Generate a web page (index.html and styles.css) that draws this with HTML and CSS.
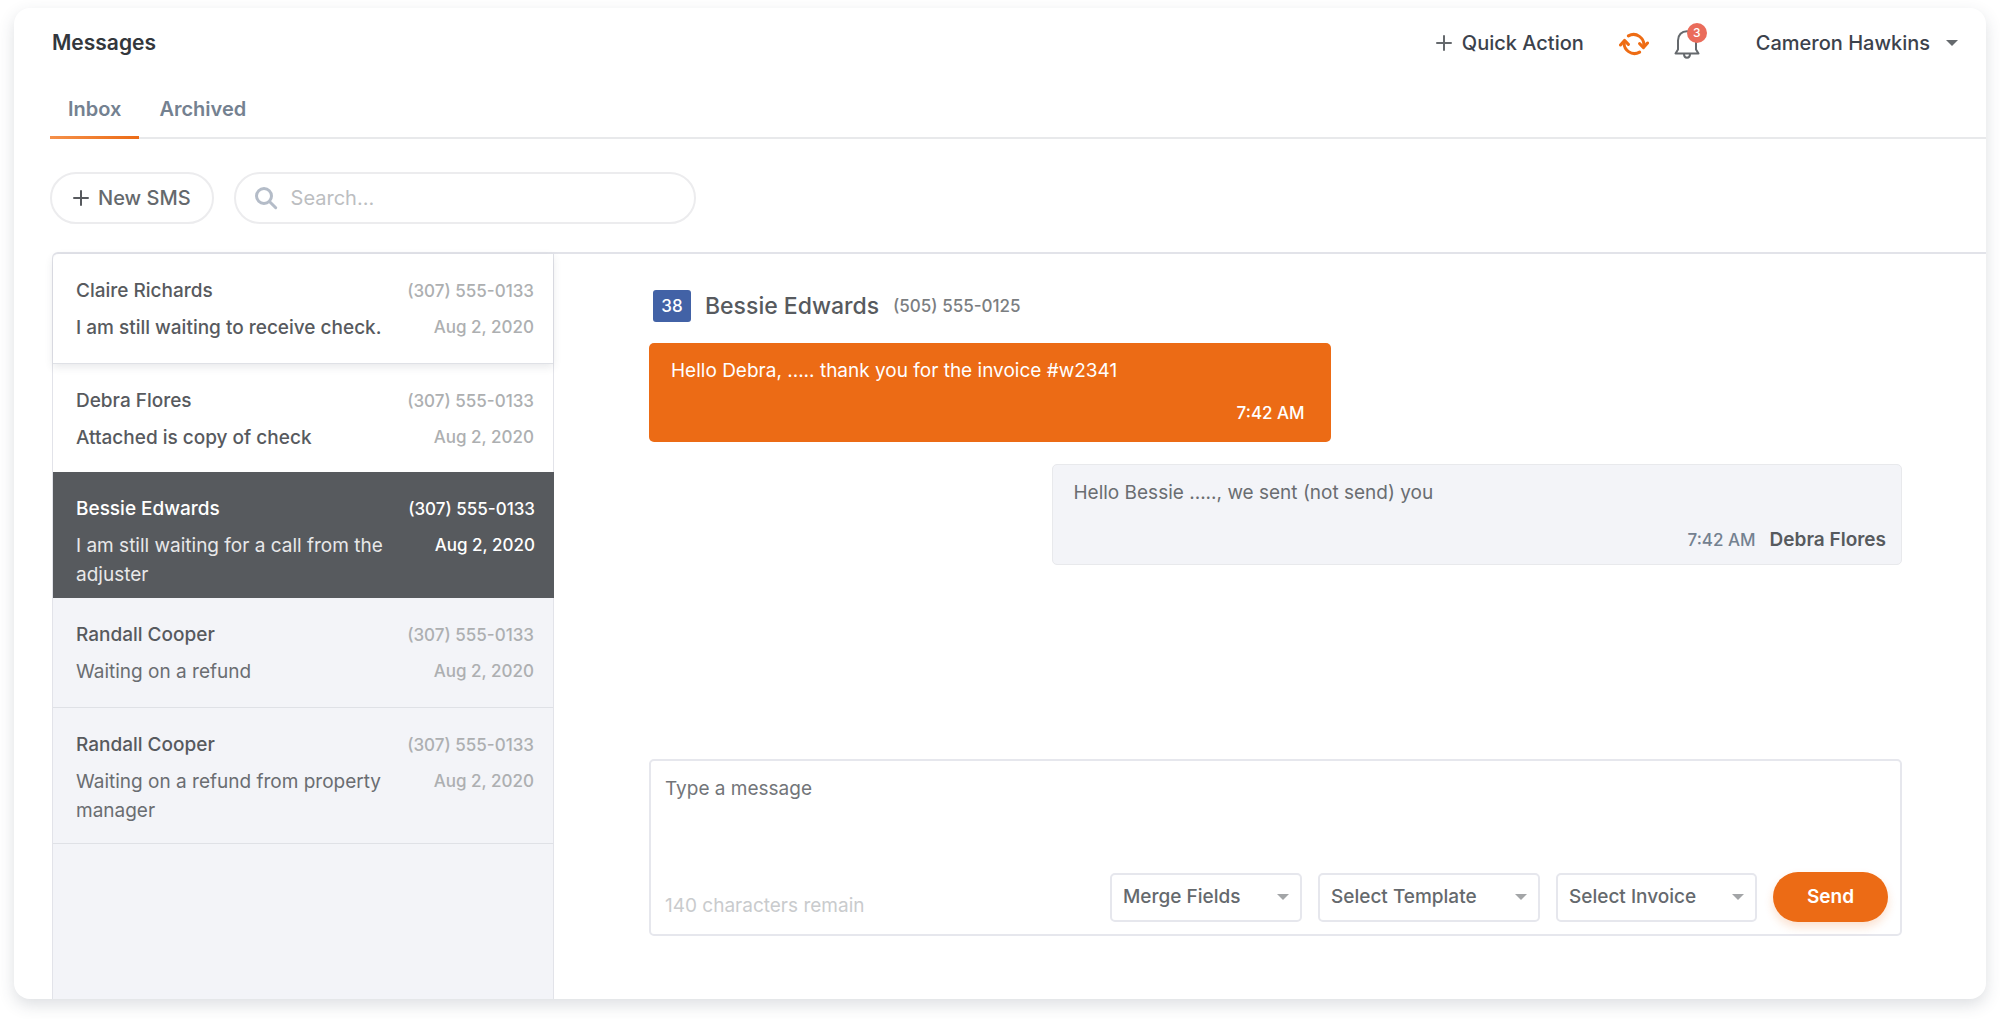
FILE: index.html
```
<!DOCTYPE html>
<html lang="en">
<head>
<meta charset="utf-8">
<meta name="viewport" content="width=device-width, initial-scale=1">
<title>Messages</title>
<link rel="stylesheet" href="styles.css">
</head>
<body>
<main class="card">
  <header class="topbar">
    <h1 class="title">Messages</h1>
    <div class="actions">
      <button class="quick" type="button">
        <svg class="plus" viewBox="0 0 16 16" aria-hidden="true"><path d="M8 1v14M1 8h14"/></svg>
        Quick Action
      </button>
      <button class="icon-btn refresh" type="button" aria-label="Refresh">
        <svg width="30" height="24" viewBox="0 0 30 24" fill="none" stroke="#ee6c14" stroke-width="3" stroke-linecap="round" stroke-linejoin="round" aria-hidden="true">
          <path d="M9.400 3.900A10.300 10.300 0 0 1 24.700 14.500"/>
          <path d="M20.600 11.600l3.900 4 4-4.600"/>
          <path d="M20.600 20.100A10.300 10.300 0 0 1 5.300 9.500"/>
          <path d="M1.500 13l4-4.600 3.900 4"/>
        </svg>
      </button>
      <button class="icon-btn bell" type="button" aria-label="3 notifications">
        <svg width="26" height="30" viewBox="0 0 26 30" fill="none" stroke="#65696d" stroke-width="2" stroke-linecap="round" stroke-linejoin="round" aria-hidden="true">
          <path d="M1.500 24.500h23l-2.500-4V11.500C22 6 18.300 2.200 13 2.200S4 6 4 11.500v9z"/>
          <path d="M10 25c0 2.200 1.200 3.700 3 3.700s3-1.500 3-3.700"/>
        </svg>
        <span class="count">3</span>
      </button>
      <button class="user" type="button">Cameron Hawkins <span class="caret"></span></button>
    </div>
  </header>

  <nav class="tabs">
    <a class="tab active" href="#inbox" aria-current="page">Inbox</a>
    <a class="tab" href="#archived">Archived</a>
  </nav>

  <div class="tools">
    <button class="new-sms" type="button">
      <svg class="plus" viewBox="0 0 16 16" aria-hidden="true"><path d="M8 1v14M1 8h14"/></svg>
      New SMS
    </button>
    <label class="search">
      <svg width="24" height="24" viewBox="0 0 24 24" fill="none" stroke="#b4bcc8" stroke-width="3" stroke-linecap="round" aria-hidden="true">
        <circle cx="10" cy="10" r="7.500"/><path d="M15.700 15.700l6 6"/>
      </svg>
      <input type="search" placeholder="Search..." aria-label="Search">
    </label>
  </div>

  <div class="panes">
    <ul class="threads">
      <li class="thread raised">
        <div class="who"><h2>Claire Richards</h2><p>I am still waiting to receive check.</p></div>
        <div class="meta"><span>(307) 555-0133</span><time>Aug 2, 2020</time></div>
      </li>
      <li class="thread unread">
        <div class="who"><h2>Debra Flores</h2><p>Attached is copy of check</p></div>
        <div class="meta"><span>(307) 555-0133</span><time>Aug 2, 2020</time></div>
      </li>
      <li class="thread selected">
        <div class="who"><h2>Bessie Edwards</h2><p>I am still waiting for a call from the adjuster</p></div>
        <div class="meta"><span>(307) 555-0133</span><time>Aug 2, 2020</time></div>
      </li>
      <li class="thread">
        <div class="who"><h2>Randall Cooper</h2><p>Waiting on a refund</p></div>
        <div class="meta"><span>(307) 555-0133</span><time>Aug 2, 2020</time></div>
      </li>
      <li class="thread">
        <div class="who"><h2>Randall Cooper</h2><p>Waiting on a refund from property manager</p></div>
        <div class="meta"><span>(307) 555-0133</span><time>Aug 2, 2020</time></div>
      </li>
    </ul>

    <section class="chat">
      <header class="chat-head">
        <span class="number">38</span>
        <h2>Bessie Edwards</h2>
        <span class="phone">(505) 555-0125</span>
      </header>
      <article class="bubble incoming">
        <p>Hello Debra, ..... thank you for the invoice #w2341</p>
        <footer><time>7:42 AM</time></footer>
      </article>
      <article class="bubble outgoing">
        <p>Hello Bessie ....., we sent (not send) you</p>
        <footer><time>7:42 AM</time><strong>Debra Flores</strong></footer>
      </article>
      <form class="composer">
        <textarea placeholder="Type a message" aria-label="Message"></textarea>
        <div class="composer-bar">
          <span class="remain">140 characters remain</span>
          <span class="select merge"><select aria-label="Merge Fields"><option>Merge Fields</option></select></span>
          <span class="select template"><select aria-label="Select Template"><option>Select Template</option></select></span>
          <span class="select invoice"><select aria-label="Select Invoice"><option>Select Invoice</option></select></span>
          <button class="send" type="button">Send</button>
        </div>
      </form>
    </section>
  </div>
</main>
</body>
</html>
```
FILE: styles.css
```
:root {
  --orange: #ec6b15;
  --ink: #575a5e;
  --line: #e2e3e9;
  --pale: #f3f4f8;
}

* { box-sizing: border-box; }

body {
  margin: 0;
  padding: 8px 14px 20px;
  min-height: 100vh;
  display: flex;
  background: #fff;
  color: var(--ink);
  font: 19px/28px "Inter", sans-serif;
}

h1, h2, p, ul { margin: 0; padding: 0; }
button, input, textarea, select { font: inherit; color: inherit; }
button { padding: 0; border: 0; background: none; cursor: pointer; }

.card {
  flex: 1;
  display: flex;
  flex-direction: column;
  min-width: 0;
  border-radius: 16px;
  background: #fff;
  box-shadow: 0 6px 16px rgba(55, 68, 85, .17);
}

/* Top bar */
.topbar {
  display: flex;
  align-items: center;
  justify-content: space-between;
  height: 70px;
  padding: 0 28px 0 38px;
}
.title { font-size: 21px; font-weight: 600; color: #33373c; }
.actions { display: flex; align-items: center; font-size: 20px; font-weight: 500; color: #3c424c; }
.plus { width: 16px; height: 16px; fill: none; stroke: #65696d; stroke-width: 2; stroke-linecap: round; }
.quick { display: flex; align-items: center; gap: 10px; }
.icon-btn { display: flex; position: relative; padding-top: 2px; }
.refresh { margin-left: 35px; }
.bell { margin-left: 25px; }
.count {
  position: absolute;
  top: -4px;
  right: -7px;
  width: 20px;
  border-radius: 10px;
  background: #ea6c5b;
  color: #fff;
  font-size: 12px;
  line-height: 20px;
}
.user { display: flex; align-items: center; gap: 16px; margin-left: 56px; }
.caret {
  border: 6px solid transparent;
  border-top-color: #65696d;
  border-bottom: 0;
}

/* Tabs */
.tabs { display: flex; margin-left: 36px; border-bottom: 2px solid #e8e9eb; }
.tab {
  margin-bottom: -2px;
  padding: 17px 20px 13px;
  border-bottom: 3px solid transparent;
  color: #748190;
  font-size: 20px;
  font-weight: 600;
  text-decoration: none;
}
.tab.active {
  padding-left: 18px;
  padding-right: 18px;
  border-image: linear-gradient(90deg, #f5914b, #ec6b15) 1;
}

/* Toolbar */
.tools { display: flex; gap: 20px; margin: 33px 0 28px 36px; font-size: 20px; }
.new-sms {
  display: flex;
  align-items: center;
  gap: 9px;
  height: 52px;
  padding: 0 21px;
  border: 2px solid #ececee;
  border-radius: 26px;
  font-weight: 500;
  color: #65696d;
}
.new-sms .plus { stroke: #575a5e; }
.search {
  display: flex;
  align-items: center;
  gap: 13px;
  width: 462px;
  height: 52px;
  padding: 0 18px;
  border: 2px solid #ececee;
  border-radius: 26px;
}
.search input { flex: 1; min-width: 0; padding: 0; border: 0; outline: 0; background: none; appearance: none; }
.search input::placeholder { color: #bcbec1; opacity: 1; }

/* Panes */
.panes {
  flex: 1;
  display: flex;
  margin-left: 38px;
  border-top: 2px solid var(--line);
  border-left: 1px solid var(--line);
  border-top-left-radius: 6px;
}

/* Threads */
.threads {
  flex: none;
  width: 501px;
  border-right: 1px solid var(--line);
  background: var(--pale);
  border-top-left-radius: 6px;
  list-style: none;
}
.thread {
  display: flex;
  justify-content: space-between;
  gap: 16px;
  padding: 23px 19px 21px 23px;
  border-bottom: 1px solid #dfe1e6;
}
.who { display: flex; flex-direction: column; gap: 8px; flex: 1; min-width: 0; }
.who h2 { font-size: 19px; font-weight: 500; }
.who p { line-height: 29px; color: #6a6d71; }
.meta {
  display: flex;
  flex-direction: column;
  gap: 8px;
  text-align: right;
  font-size: 17px;
  font-weight: 500;
  color: #adafb1;
}
.raised, .unread { background: #fff; }
.raised .who p, .unread .who p { font-weight: 500; color: var(--ink); }
.raised {
  border-top-left-radius: 6px;
  position: relative;
  box-shadow: 0 3px 8px rgba(55, 68, 85, .12);
}
.unread { padding-bottom: 20px; border-bottom: 0; }
.selected { margin-right: -1px; padding-bottom: 9px; border: 0; background: #575a5e; color: #fff; }
.selected .who p { color: #e8e8e9; }
.selected .meta { color: #fff; }
.thread:last-child { padding-bottom: 18px; }

/* Conversation */
.chat {
  flex: 1;
  display: flex;
  flex-direction: column;
  min-width: 0;
  padding: 36px 84px 63px 95px;
}
.chat-head { display: flex; align-items: center; gap: 14px; margin: 0 0 21px 4px; }
.number {
  width: 38px;
  border-radius: 3px;
  background: #4262a6;
  color: #fff;
  font-size: 17px;
  font-weight: 500;
  line-height: 32px;
  text-align: center;
}
.chat-head h2 { font-size: 23px; font-weight: 500; }
.phone { font-size: 17px; font-weight: 500; color: #7b7e81; }
.bubble { border-radius: 5px; padding: 14px 20px 15px; }
.bubble footer { display: flex; justify-content: flex-end; gap: 14px; }
.bubble time { font-size: 17px; font-weight: 500; }
.bubble strong { font-weight: 600; }
.incoming { width: 54.400%; background: var(--orange); color: #fff; padding-left: 22px; padding-right: 26px; }
.incoming footer { margin-top: 14px; }
.outgoing {
  align-self: flex-end;
  width: 67.800%;
  margin-top: 22px;
  padding-right: 15px;
  padding-bottom: 10px;
  border: 1px solid #e8e9ec;
  background: var(--pale);
  color: #6a6d71;
}
.outgoing footer { margin-top: 19px; }
.outgoing time { color: #748190; }
.outgoing strong { color: var(--ink); }

/* Composer */
.composer {
  display: flex;
  flex-direction: column;
  height: 177px;
  margin-top: auto;
  padding: 14px 12px 12px 14px;
  border: 2px solid #e6e7ed;
  border-radius: 5px;
}
.composer textarea { flex: 1; padding: 0; border: 0; outline: 0; resize: none; background: none; }
.composer textarea::placeholder { color: #727579; opacity: 1; }
.composer-bar { display: flex; align-items: center; gap: 16px; }
.remain { margin: 17px auto 0 0; color: #c9cbcd; }
.select { display: grid; align-items: center; }
.select::after {
  content: "";
  grid-area: 1 / 1;
  justify-self: end;
  margin-right: 13px;
  border: 6px solid transparent;
  border-top-color: #a3a5a7;
  border-bottom: 0;
  pointer-events: none;
}
.select select {
  grid-area: 1 / 1;
  width: 100%;
  height: 49px;
  padding: 0 11px;
  border: 2px solid #e6e7ed;
  border-radius: 5px;
  background: #fff;
  appearance: none;
  font-weight: 500;
  color: #65696d;
}
.merge { width: 192px; }
.template { width: 222px; }
.invoice { width: 201px; }
.send {
  width: 115px;
  height: 50px;
  border-radius: 25px;
  background: var(--orange);
  box-shadow: 0 5px 10px rgba(236, 107, 21, .2);
  color: #fff;
  font-weight: 600;
}
```
